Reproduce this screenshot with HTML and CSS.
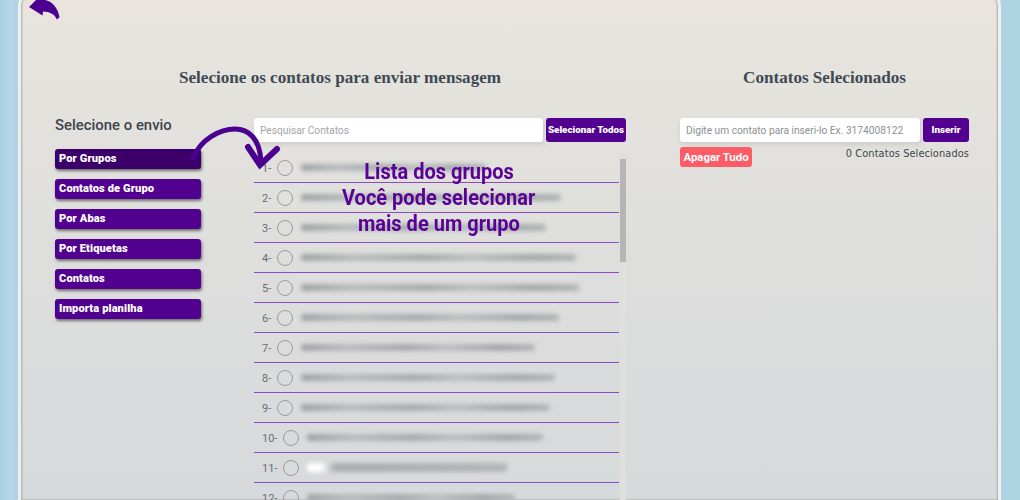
FILE: index.html
```html
<!DOCTYPE html>
<html lang="pt">
<head>
<meta charset="utf-8">
<title>Selecione os contatos</title>
<link rel="stylesheet" href="styles.css">
</head>
<body>
<main class="card">
  <svg class="back" width="32" height="22" viewBox="0 0 32 22" aria-hidden="true"><path d="M0 7 L7 0 H16 C23 1 29 8 30.500 17 L28 19.500 C26 15 22 12 14 11.500 L13.500 15.500 Z" fill="#4b0090"/></svg>
  <div class="layout">
    <section class="send">
      <h3 class="send-title">Selecione o envio</h3>
      <nav class="menu">
        <button class="menu-btn active">Por Grupos</button>
        <button class="menu-btn">Contatos de Grupo</button>
        <button class="menu-btn">Por Abas</button>
        <button class="menu-btn">Por Etiquetas</button>
        <button class="menu-btn">Contatos</button>
        <button class="menu-btn">Importa planilha</button>
      </nav>
    </section>
    <section class="contacts">
      <h2 class="title">Selecione os contatos para enviar mensagem</h2>
      <div class="search-row">
        <input class="field" placeholder="Pesquisar Contatos">
        <button class="action wide">Selecionar Todos</button>
      </div>
      <div class="list-wrap">
        <ul class="list">
          <li class="row"><span class="num">1-</span><span class="radio"></span><span class="blur" style="width:185px"></span></li>
          <li class="row"><span class="num">2-</span><span class="radio"></span><span class="blur" style="width:260px"></span></li>
          <li class="row"><span class="num">3-</span><span class="radio"></span><span class="blur" style="width:245px"></span></li>
          <li class="row"><span class="num">4-</span><span class="radio"></span><span class="blur" style="width:275px"></span></li>
          <li class="row"><span class="num">5-</span><span class="radio"></span><span class="blur" style="width:278px"></span></li>
          <li class="row"><span class="num">6-</span><span class="radio"></span><span class="blur" style="width:258px"></span></li>
          <li class="row"><span class="num">7-</span><span class="radio"></span><span class="blur" style="width:234px"></span></li>
          <li class="row"><span class="num">8-</span><span class="radio"></span><span class="blur" style="width:254px"></span></li>
          <li class="row"><span class="num">9-</span><span class="radio"></span><span class="blur" style="width:249px"></span></li>
          <li class="row"><span class="num">10-</span><span class="radio"></span><span class="blur" style="width:236px"></span></li>
          <li class="row"><span class="num">11-</span><span class="radio"></span><span class="blur thumb" style="width:200px"></span></li>
          <li class="row"><span class="num">12-</span><span class="radio"></span><span class="blur" style="width:208px"></span></li>
        </ul>
        <div class="scrollbar"><span class="scroll-thumb"></span></div>
        <div class="note">
          <p>Lista dos grupos</p>
          <p>Você pode selecionar</p>
          <p>mais de um grupo</p>
        </div>
      </div>
    </section>
    <section class="selected">
      <h2 class="title">Contatos Selecionados</h2>
      <div class="search-row">
        <input class="field" placeholder="Digite um contato para inseri-lo Ex. 3174008122">
        <button class="action insert">Inserir</button>
      </div>
      <div class="selected-foot">
        <button class="danger">Apagar Tudo</button>
        <span class="count">0 Contatos Selecionados</span>
      </div>
    </section>
  </div>
  <svg class="curve" width="100" height="60" viewBox="0 0 100 60" aria-hidden="true">
    <path d="M8 38 C16 19 35 9 50 9 C63 9 75 18 76 42" fill="none" stroke="#4b0090" stroke-width="5" stroke-linecap="round"/>
    <path d="M63 27 L75 45 L92 29" fill="none" stroke="#4b0090" stroke-width="6" stroke-linecap="round" stroke-linejoin="miter"/>
  </svg>
</main>
</body>
</html>
```
FILE: styles.css
```css
* { box-sizing: border-box; }
html, body { height: 500px; overflow: hidden; }
body {
  margin: 0;
  padding: 0 19px 0 18px;
  background: linear-gradient(90deg, #a9d0e2 0, #b5d7e6 10px, #add3e3 18px);
  font-family: Roboto, "Liberation Sans", sans-serif;
}
.card {
  position: relative;
  height: 510px;
  margin-top: -10px;
  border: 2px solid #eff0ee;
  border-bottom: 0;
  border-left-width: 3px;
  border-right-width: 3px;
  border-radius: 16px 16px 0 0;
  background: linear-gradient(180deg, #e9e5dd 0, #e2e1dd 150px, #d9dbdc 400px, #d7dadc 510px);
  box-shadow: inset 1px 0 2px #a9adad, inset -1px 0 2px #a9adad;
}
.back { position: absolute; left: 8px; top: 8px; }
.curve { position: absolute; left: 164px; top: 128px; }
.layout {
  display: grid;
  grid-template-columns: 199px 372px 343px;
  padding: 0 0 0 34px;
}
.layout > .selected { padding-left: 54px; }
.title {
  margin: 0;
  padding-top: 75px;
  height: 126px;
  font: bold 17.100px/22px "Liberation Serif", serif;
  color: #3e4a54;
  white-space: nowrap;
  text-align: center;
}
.contacts .title { margin-left: -200px; }
.send { padding-top: 124px; }
.send-title {
  margin: 0 0 15px;
  font: 500 14.900px/18px Roboto, sans-serif;
  color: #3c444c;
}
.menu { display: flex; flex-direction: column; gap: 10px; }
.menu-btn {
  width: 146px;
  height: 20px;
  padding: 0 4px;
  border: 0;
  border-radius: 3px;
  background: #520090;
  box-shadow: 1px 2px 3px #6f6f6f;
  color: #fff;
  text-align: left;
  font: 900 11.100px/18px Roboto, sans-serif;
  letter-spacing: .1px;
}
.menu-btn.active { background: #3b0069; }
.search-row { display: flex; gap: 3.500px; }
.field {
  flex: 1;
  min-width: 0;
  height: 24px;
  padding: 0 6px;
  border: 0;
  border-radius: 3px;
  background: #fff;
  box-shadow: 1px 2px 5px #c9c9c5;
  font: 400 10.200px Roboto, sans-serif;
  outline: 0;
}
.field::placeholder { color: #a2a4aa; opacity: 1; }
.selected .field::placeholder { color: #8b8f94; }
.action {
  height: 24px;
  border: 0;
  border-radius: 3px;
  background: #520090;
  color: #fff;
  padding: 0;
  font: 900 9.800px/24px Roboto, sans-serif;
}
.wide { width: 80px; flex: none; }
.insert { width: 46px; flex: none; }
.list-wrap {
  position: relative;
  display: flex;
  margin-top: 11px;
  height: 347px;
  overflow: hidden;
}
.list {
  width: 365px;
  margin: 0;
  padding: 0;
  list-style: none;
}
.row {
  display: flex;
  align-items: center;
  height: 30px;
  padding-left: 8px;
  border-bottom: 1px solid #8b4cc5;
}
.num { font-size: 11px; line-height: 13px; padding-top: 2px; color: #6a7076; margin-right: 6px; }
.radio {
  width: 16px;
  height: 16px;
  border: 1px solid #9b9b9b;
  border-radius: 50%;
  flex: none;
  margin-right: 7px;
}
.blur {
  height: 7px;
  margin-left: 1px;
  border-radius: 3px;
  background: linear-gradient(90deg, #9fa3a5, #b9bcbd 20%, #a6aaac 45%, #bcbfc0 62%, #a4a8aa 85%, #b3b6b7);
  filter: blur(2px);
}
.thumb { background: linear-gradient(90deg, #fff 0, #fff 14px, #a9adaf 28px, #b3b6b7); height: 9px; }
.scrollbar {
  margin-left: 1px;
  width: 6px;
  padding-top: 6px;
  background: #dfdfdc;
}
.scroll-thumb { display: block; height: 103px; background: #b5b5b5; }
.note {
  position: absolute;
  left: 185px;
  top: 5px;
  width: 0;
  display: flex;
  flex-direction: column;
  align-items: center;
  color: #5a0096;
  font: 700 22.500px/26px Roboto, sans-serif;
  white-space: nowrap;
}
.note p { margin: 0; transform: scaleX(.89); }
.selected-foot {
  display: flex;
  justify-content: space-between;
  align-items: flex-start;
  margin-top: 5px;
}
.danger {
  width: 72px;
  height: 20px;
  padding: 0;
  border: 0;
  border-radius: 3px;
  background: #fc5c65;
  color: #fff;
  font: 700 11.400px/20px Roboto, sans-serif;
}
.count {
  font: 400 9.800px/13px "DejaVu Sans", sans-serif;
  color: #3f464c;
  letter-spacing: .1px;
  white-space: nowrap;
}
```
